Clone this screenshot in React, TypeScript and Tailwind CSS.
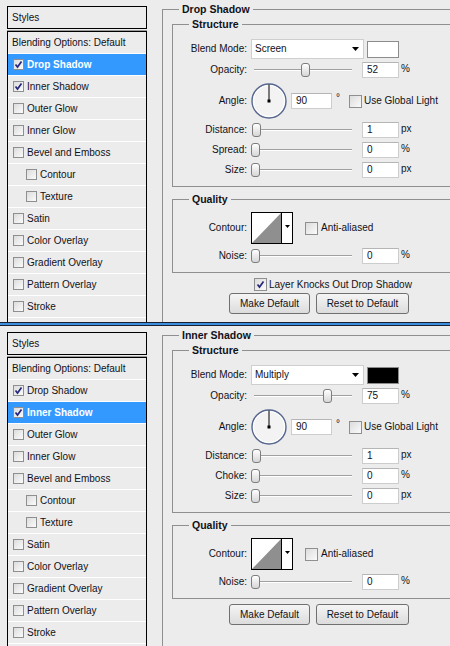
import React from "react";

type Item = { label: string; checked?: boolean; indent?: boolean };

const items: Item[] = [
  { label: "Drop Shadow", checked: true },
  { label: "Inner Shadow", checked: true },
  { label: "Outer Glow" },
  { label: "Inner Glow" },
  { label: "Bevel and Emboss" },
  { label: "Contour", indent: true },
  { label: "Texture", indent: true },
  { label: "Satin" },
  { label: "Color Overlay" },
  { label: "Gradient Overlay" },
  { label: "Pattern Overlay" },
  { label: "Stroke" },
];

function Check({ checked, small }: { checked?: boolean; small?: boolean }) {
  return (
    <span
      className={
        small
          ? "shrink-0 w-[11px] h-[11px] border border-[#8e8f8f] bg-linear-to-br from-[#dcdcdc] to-[#fbfbfb] flex items-center justify-center"
          : "shrink-0 w-[13px] h-[13px] border border-[#8e8f8f] bg-linear-to-br from-[#dcdcdc] to-[#fbfbfb] flex items-center justify-center"
      }
    >
      {checked && (
        <svg width="9" height="9" viewBox="0 0 9 9">
          <polyline points="1.5,4.5 3.5,7 7.5,1.5" fill="none" stroke="#26277c" strokeWidth="1.7" />
        </svg>
      )}
    </span>
  );
}

function StyleList({ active }: { active: string }) {
  return (
    <div className="w-[150px] shrink-0 pl-[7px] pt-[6px]">
      <div className="w-[140px] h-[23px] border border-black flex items-center pl-[4px]">Styles</div>
      <div className="w-[140px] h-[2px] border-b border-[#9a9a9a]" />
      <div className="w-[140px] h-[400px] border border-black">
        <div className="h-[22px] border-b border-white flex items-center pl-[4px]">Blending Options: Default</div>
        {items.map((it) => {
          const on = it.label === active;
          return (
            <div
              key={it.label}
              className={
                (on ? "bg-[#3399ff] text-white font-bold " : "") +
                (it.indent ? "pl-[18px] " : "pl-[5px] ") +
                "h-[22px] border-b border-white flex items-center gap-[3px]"
              }
            >
              <Check checked={it.checked} small />
              <span>{it.label}</span>
            </div>
          );
        })}
      </div>
    </div>
  );
}

function Label({ children }: { children: React.ReactNode }) {
  return <span className="w-[74px] shrink-0 text-right">{children}</span>;
}

function Input({ value, wide }: { value: string; wide?: boolean }) {
  return (
    <div
      className={
        (wide ? "w-[41px] " : "w-[37px] ") +
        "h-[16px] bg-white border border-[#cdcdcd] border-t-[#b5b5b5] flex items-center pl-[4px] shrink-0"
      }
    >
      {value}
    </div>
  );
}

function Slider({ value }: { value: number }) {
  return (
    <div className="relative w-[107px] h-[16px] flex items-center shrink-0">
      <div className="ml-[3px] w-[98px] h-[2px] border-t border-[#a0a0a0] bg-white" />
      <div
        className="absolute top-[1px] w-[9px] h-[14px] rounded-[3px] border border-[#7d7d7d] bg-linear-to-b from-white to-[#d6d6d6]"
        style={{ left: value * 0.96 }}
      />
    </div>
  );
}

function SliderRow({ label, value, unit }: { label: string; value: number; unit: string }) {
  return (
    <div className="flex items-center h-[16px]">
      <Label>{label}</Label>
      <span className="ml-[4px]" />
      <Slider value={value} />
      <span className="ml-[4px]" />
      <Input value={String(value)} />
      <span className="ml-[2px] -mt-[3px]">{unit}</span>
    </div>
  );
}

function Button({ children, w }: { children: React.ReactNode; w: string }) {
  return (
    <div
      className={
        w +
        " h-[21px] rounded-[3px] border border-[#707070] bg-linear-to-b from-[#f5f5f5] to-[#dcdcdc] flex items-center justify-center"
      }
    >
      {children}
    </div>
  );
}

function Settings({
  title,
  blend,
  swatch,
  opacity,
  second,
  knock,
}: {
  title: string;
  blend: string;
  swatch: string;
  opacity: number;
  second: string;
  knock: boolean;
}) {
  return (
    <div className="flex-1 min-w-0">
      <fieldset className="ml-[12px] mt-[3px] border-t border-l border-[#8f8f8f] pl-[9px] h-[600px]">
        <legend className="ml-[7px] px-[3px] text-[10.5px] leading-[13px] font-bold">{title}</legend>
        <fieldset className="mt-[2px] border-t border-l border-b border-[#8f8f8f] pb-[8px]">
          <legend className="ml-[16px] px-[3px] text-[10.5px] leading-[13px] font-bold">Structure</legend>
          <div className="flex flex-col">
            <div className="mt-[8px] flex items-center h-[20px]">
              <Label>Blend Mode:</Label>
              <div className="ml-[4px] w-[113px] h-[20px] bg-white border border-[#cfcfcf] flex items-center justify-between pl-[3px] pr-[4px]">
                <span>{blend}</span>
                <svg width="7" height="4" viewBox="0 0 7 4">
                  <polygon points="0,0 7,0 3.5,4" fill="#000" />
                </svg>
              </div>
              <div className={"ml-[3px] w-[32px] h-[17px] border border-[#8c8c8c] " + swatch} />
            </div>
            <div className="mt-[3px]">
              <SliderRow label="Opacity:" value={opacity} unit="%" />
            </div>
            <div className="mt-[5px] flex items-center h-[36px]">
              <Label>Angle:</Label>
              <svg className="ml-[4px] shrink-0" width="36" height="36" viewBox="0 0 36 36">
                <circle cx="18" cy="18" r="17" fill="#f3f3f3" stroke="#56678f" strokeWidth="1.4" />
                <circle cx="18" cy="18" r="15.6" fill="none" stroke="#ffffff" strokeWidth="1" />
                <line x1="18" y1="18" x2="18" y2="1.5" stroke="#000" strokeWidth="1" />
                <rect x="16.5" y="16.5" width="3" height="3" fill="#000" />
              </svg>
              <span className="ml-[4px]" />
              <Input value="90" wide />
              <span className="ml-[4px] w-[13px] -mt-[7px]">°</span>
              <Check />
              <span className="ml-[2px]">Use Global Light</span>
            </div>
            <div className="mt-[3px]">
              <SliderRow label="Distance:" value={1} unit="px" />
            </div>
            <div className="mt-[4px]">
              <SliderRow label={second} value={0} unit="%" />
            </div>
            <div className="mt-[4px]">
              <SliderRow label="Size:" value={0} unit="px" />
            </div>
          </div>
        </fieldset>
        <fieldset className="mt-[6px] border-t border-l border-b border-[#8f8f8f] pb-[8px]">
          <legend className="ml-[16px] px-[3px] text-[10.5px] leading-[13px] font-bold">Quality</legend>
          <div className="flex flex-col">
            <div className="mt-[6px] flex items-center h-[32px]">
              <Label>Contour:</Label>
              <div className="ml-[4px] w-[42px] h-[32px] border border-black bg-white flex shrink-0">
                <svg width="29" height="30" viewBox="0 0 29 30">
                  <polygon points="0,30 29,0 29,30" fill="#8f8f8f" />
                </svg>
                <div className="w-[11px] border-l border-black flex items-center justify-center">
                  <svg width="5" height="3" viewBox="0 0 5 3" className="-mt-[3px]">
                    <polygon points="0,0 5,0 2.5,3" fill="#000" />
                  </svg>
                </div>
              </div>
              <span className="ml-[12px]" />
              <Check />
              <span className="ml-[3px]">Anti-aliased</span>
            </div>
            <div className="mt-[4px]">
              <SliderRow label="Noise:" value={0} unit="%" />
            </div>
          </div>
        </fieldset>
        {knock && (
          <div className="mt-[5px] h-[13px] flex items-center pl-[82px]">
            <Check checked />
            <span className="ml-[2px]">Layer Knocks Out Drop Shadow</span>
          </div>
        )}
        <div className={(knock ? "mt-[2px]" : "mt-[5px]") + " flex gap-[6px] pl-[57px]"}>
          <Button w="w-[81px]">Make Default</Button>
          <Button w="w-[93px]">Reset to Default</Button>
        </div>
      </fieldset>
    </div>
  );
}

export default function App() {
  return (
    <div className="w-[450px] h-[646px] overflow-hidden bg-[#ececec] text-[10px] leading-[12px] text-[#111118] font-['Liberation_Sans',Arial,sans-serif]">
      <div className="flex h-[322px] overflow-hidden">
        <StyleList active="Drop Shadow" />
        <Settings title="Drop Shadow" blend="Screen" swatch="bg-white" opacity={52} second="Spread:" knock />
      </div>
      <div className="h-[4px] bg-[#3c8fe0] border-y border-[#1a2230]" />
      <div className="flex h-[320px] overflow-hidden">
        <StyleList active="Inner Shadow" />
        <Settings title="Inner Shadow" blend="Multiply" swatch="bg-black" opacity={75} second="Choke:" knock={false} />
      </div>
    </div>
  );
}
